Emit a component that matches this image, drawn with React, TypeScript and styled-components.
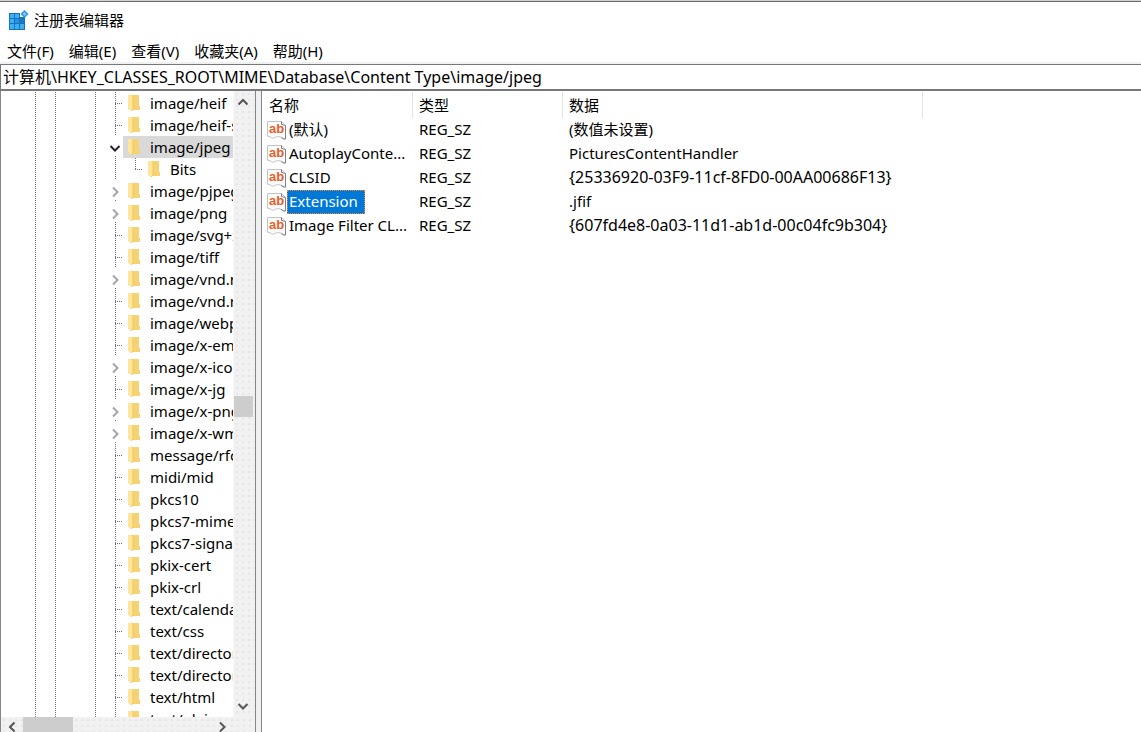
import React from "react";
import styled, { createGlobalStyle, css } from "styled-components";

const GlobalStyle = createGlobalStyle`
  * { box-sizing: border-box; }
  body {
    margin: 0;
    background: #fff;
    color: #000;
    font: 15px/22px "Noto Sans", "Noto Sans CJK SC", sans-serif;
  }
`;

const dottedDown = "repeating-linear-gradient(to bottom, #707070 0 1px, transparent 1px 2px)";
const dottedAcross = "repeating-linear-gradient(to right, #707070 0 1px, transparent 1px 2px)";

const Window = styled.div`
  display: flex;
  flex-direction: column;
  height: 100vh;
  overflow: hidden;
  border-top: 1px solid #d2d2d2;
`;

const TitleBar = styled.header`
  display: flex;
  align-items: center;
  gap: 5px;
  height: 38px;
  padding: 0 0 2px 8px;
  border-top: 1px solid #6b6b6b;
`;

const Title = styled.h1`
  margin: 0;
  font: inherit;
`;

const MenuBar = styled.nav`
  display: flex;
  gap: 15px;
  height: 25px;
  padding-left: 7px;
  border-bottom: 2px solid #f0f0f0;
`;

const MenuItem = styled.button`
  padding: 0;
  border: 0;
  background: none;
  color: inherit;
  font: inherit;
`;

const Address = styled.input`
  height: 27px;
  width: 100%;
  flex: none;
  padding: 0 3px 2px 2px;
  border: solid #76797c;
  border-width: 1px 0 2px 1px;
  background: #fff;
  color: inherit;
  font: inherit;
  font-size: 16px;
  outline: 0;
`;

const Panes = styled.main`
  display: flex;
  flex: 1;
  min-height: 0;
`;

const TreePane = styled.section`
  display: flex;
  flex-direction: column;
  flex: none;
  width: 256px;
  border: solid #828790;
  border-width: 0 1px;
`;

const TreeBody = styled.div`
  display: flex;
  flex: 1;
  min-height: 0;
`;

const Tree = styled.ul`
  flex: 1;
  margin: 0;
  padding: 1px 0 0 24px;
  overflow: hidden;
  list-style: none;
`;

const TreeRow = styled.li`
  display: flex;
  height: 22px;
`;

const Guide = styled.span<{ $line?: boolean }>`
  flex: none;
  width: 20px;
  background: ${(p) => (p.$line ? dottedDown : "none")} 10px 0 / 1px 100% no-repeat;
`;

const Connector = styled.span<{ $kind: "branch" | "last" }>`
  flex: none;
  width: 18px;
  background:
    ${dottedDown} 10px 0 / 1px ${(p) => (p.$kind === "last" ? "12px" : "100%")} no-repeat,
    ${dottedAcross} 10px 11px / 8px 1px no-repeat;
`;

const Toggle = styled.button`
  display: flex;
  flex: none;
  align-items: center;
  width: 18px;
  padding: 1px 0 0 4px;
  border: 0;
  background: ${dottedDown} 10px 20px / 1px 2px no-repeat;
`;

const Node = styled.span<{ $selected: boolean }>`
  display: flex;
  flex: 1;
  gap: 10px;
  align-items: center;
  padding-left: 5px;
  overflow: hidden;
  white-space: nowrap;
  background: ${(p) => (p.$selected ? "#d9d9d9" : "transparent")};

  svg {
    flex: none;
  }
`;

const track = css`
  background: #f1f1f1 radial-gradient(circle, #e6e6e6 1px, transparent 1px) 0 0 / 6px 6px;
`;

const VScroll = styled.div`
  display: flex;
  flex-direction: column;
  flex: none;
  width: 22px;
  padding-right: 2px;
  border-left: 1px solid #f8f8f8;
  ${track}
`;

const HScroll = styled.div`
  display: flex;
  flex: none;
  height: 15px;
  padding-right: 22px;
  overflow: hidden;
  ${track}
`;

const Arrow = styled.button`
  display: grid;
  place-items: center;
  flex: none;
  width: 22px;
  height: 20px;
  padding: 0;
  border: 0;
  background: none;
`;

const VArrow = styled(Arrow)`
  width: 18px;
  height: 22px;
`;

const VRail = styled.div`
  flex: 1;
  padding-top: 283px;
`;

const VThumb = styled.div`
  height: 21px;
  background: #cdcdcd;
`;

const HRail = styled.div`
  display: flex;
  flex: 1;
`;

const HThumb = styled.div`
  width: 50px;
  background: #cdcdcd;
`;

const Splitter = styled.div`
  flex: none;
  width: 5px;
  background: #f0f0f0;
`;

const ListPane = styled.section`
  flex: 1;
  min-width: 0;
  padding-top: 1px;
  overflow: hidden;
  border-left: 1px solid #828790;
`;

const List = styled.table`
  width: 100%;
  table-layout: fixed;
  border-spacing: 0;
`;

const Col = styled.col<{ $width?: number }>`
  width: ${(p) => (p.$width ? `${p.$width}px` : "auto")};
`;

const HeadCell = styled.th<{ $first?: boolean }>`
  height: 26px;
  padding: 0 0 0 6px;
  border-left: 1px solid ${(p) => (p.$first ? "transparent" : "#e2e2e2")};
  font-weight: 400;
  text-align: left;
`;

const Cell = styled.td<{ $code?: boolean }>`
  height: 24px;
  padding: 0 0 2px 7px;
  font-size: ${(p) => (p.$code ? 16 : 15)}px;
  white-space: nowrap;
`;

const NameCell = styled(Cell)`
  padding: 0 0 0 5px;
`;

const NameBox = styled.div`
  display: flex;
  align-items: center;

  svg {
    flex: none;
  }
`;

const Name = styled.span<{ $selected: boolean }>`
  height: 24px;
  padding: 0 6px 0 1px;
  border: 1px dotted ${(p) => (p.$selected ? "#ff8728" : "transparent")};
  background: ${(p) => (p.$selected ? "#0078d7" : "transparent")};
  color: ${(p) => (p.$selected ? "#fff" : "inherit")};
  line-height: 20px;
`;

const paths = {
  up: "M1.500 8.500 6 4l4.500 4.500",
  down: "M1.500 4 6 8.500 10.500 4",
  left: "M8.500 1.500 4 6l4.500 4.500",
  right: "M4 1.500 8.500 6 4 10.500",
};

const Chevron = ({ to, color = "#555" }: { to: keyof typeof paths; color?: string }) => (
  <svg width="12" height="12" viewBox="0 0 12 12" fill="none" stroke={color} strokeWidth="2" aria-hidden="true">
    <path d={paths[to]} />
  </svg>
);

const FolderIcon = () => (
  <svg width="12" height="18" viewBox="0 0 12 18" aria-hidden="true">
    <path d="M0 1h11v11h1v4H3L0 15z" fill="#f6d272" />
    <path d="M0 1h3l2 2v12l-2 2-3-3z" fill="#ffe69a" />
    <path d="M5 3v12l-2 2" fill="none" stroke="#eec55c" />
  </svg>
);

const RegistryIcon = () => (
  <svg width="21" height="21" viewBox="0 0 21 21" aria-hidden="true">
    <path d="M1 4h11v4h5v13H1z" fill="#1274c0" />
    <path d="M2 5h4v4H2zM7 5h4v4H7zM2 10h4v4H2zM2 15h4v5H2zM7 15h4v5H7zM12 15h4v5h-4z" fill="#41aef0" />
    <path d="M7 10h4v4H7z" fill="#2b93dc" />
    <path d="M12 10h4v4h-4z" fill="#1a7bc8" />
    <path d="M16.500 1 20.500 5l-4 4-4-4z" fill="#2c94dc" />
    <path d="M16.500 3 18.500 5l-2 2-2-2z" fill="#7cccf8" />
  </svg>
);

const StringIcon = () => (
  <svg width="20" height="20" viewBox="0 0 20 20" aria-hidden="true">
    <path d="M.5 1.500h14l4 4v13.500c-3 .5-4-2.500-7-2.500s-4 2-6 1.500-3-2-5-1.500z" fill="#fbfbfb" stroke="#c4c4c4" />
    <path d="M14.500 1.500v3l4 1v13.500c-2 .3-3-.8-4.500-1.700" fill="none" stroke="#808080" />
    <text x="2" y="13" fontFamily="Liberation Sans, sans-serif" fontSize="13" fontWeight="700" fill="#e4602c">ab</text>
  </svg>
);

type Item = { label: string; toggle?: "open" | "closed"; child?: boolean };

const items: Item[] = [
  { label: "image/heif" },
  { label: "image/heif-sequence" },
  { label: "image/jpeg", toggle: "open" },
  { label: "Bits", child: true },
  { label: "image/pjpeg", toggle: "closed" },
  { label: "image/png", toggle: "closed" },
  { label: "image/svg+xml" },
  { label: "image/tiff" },
  { label: "image/vnd.ms-dds", toggle: "closed" },
  { label: "image/vnd.ms-photo" },
  { label: "image/webp" },
  { label: "image/x-emf" },
  { label: "image/x-icon", toggle: "closed" },
  { label: "image/x-jg" },
  { label: "image/x-png", toggle: "closed" },
  { label: "image/x-wmf", toggle: "closed" },
  { label: "message/rfc822" },
  { label: "midi/mid" },
  { label: "pkcs10" },
  { label: "pkcs7-mime" },
  { label: "pkcs7-signature" },
  { label: "pkix-cert" },
  { label: "pkix-crl" },
  { label: "text/calendar" },
  { label: "text/css" },
  { label: "text/directory" },
  { label: "text/directory" },
  { label: "text/html" },
  { label: "text/plain" },
];

const values = [
  { name: "(默认)", data: "(数值未设置)" },
  { name: "AutoplayConte...", data: "PicturesContentHandler" },
  { name: "CLSID", data: "{25336920-03F9-11cf-8FD0-00AA00686F13}", code: true },
  { name: "Extension", data: ".jfif" },
  { name: "Image Filter CL...", data: "{607fd4e8-0a03-11d1-ab1d-00c04fc9b304}", code: true },
];

const menus = ["文件(F)", "编辑(E)", "查看(V)", "收藏夹(A)", "帮助(H)"];

const TreeItem = ({ label, toggle, child }: Item) => (
  <TreeRow>
    <Guide $line />
    <Guide $line />
    <Guide />
    <Guide $line />
    {child && <Guide $line />}
    {toggle ? (
      <Toggle aria-label={label} aria-expanded={toggle === "open"}>
        {toggle === "open" ? <Chevron to="down" color="#2b2130" /> : <Chevron to="right" color="#a6a6a6" />}
      </Toggle>
    ) : (
      <Connector $kind={child ? "last" : "branch"} />
    )}
    <Node $selected={toggle === "open"}>
      <FolderIcon />
      {label}
    </Node>
  </TreeRow>
);

export default function App() {
  return (
    <Window>
      <GlobalStyle />
      <TitleBar>
        <RegistryIcon />
        <Title>注册表编辑器</Title>
      </TitleBar>
      <MenuBar>
        {menus.map((m) => (
          <MenuItem key={m}>{m}</MenuItem>
        ))}
      </MenuBar>
      <Address aria-label="地址" defaultValue="计算机\HKEY_CLASSES_ROOT\MIME\Database\Content Type\image/jpeg" />
      <Panes>
        <TreePane>
          <TreeBody>
            <Tree>
              {items.map((item, i) => (
                <TreeItem key={i} {...item} />
              ))}
            </Tree>
            <VScroll>
              <VArrow aria-label="向上滚动"><Chevron to="up" /></VArrow>
              <VRail><VThumb /></VRail>
              <VArrow aria-label="向下滚动"><Chevron to="down" /></VArrow>
            </VScroll>
          </TreeBody>
          <HScroll>
            <Arrow aria-label="向左滚动"><Chevron to="left" /></Arrow>
            <HRail><HThumb /></HRail>
            <Arrow aria-label="向右滚动"><Chevron to="right" /></Arrow>
          </HScroll>
        </TreePane>
        <Splitter />
        <ListPane>
          <List>
            <colgroup>
              <Col $width={150} />
              <Col $width={150} />
              <Col $width={360} />
              <Col />
            </colgroup>
            <thead>
              <tr>
                <HeadCell $first>名称</HeadCell>
                <HeadCell>类型</HeadCell>
                <HeadCell>数据</HeadCell>
                <HeadCell />
              </tr>
            </thead>
            <tbody>
              {values.map(({ name, data, code }) => (
                <tr key={name}>
                  <NameCell>
                    <NameBox>
                      <StringIcon />
                      <Name $selected={name === "Extension"}>{name}</Name>
                    </NameBox>
                  </NameCell>
                  <Cell>REG_SZ</Cell>
                  <Cell $code={code}>{data}</Cell>
                  <Cell />
                </tr>
              ))}
            </tbody>
          </List>
        </ListPane>
      </Panes>
    </Window>
  );
}
